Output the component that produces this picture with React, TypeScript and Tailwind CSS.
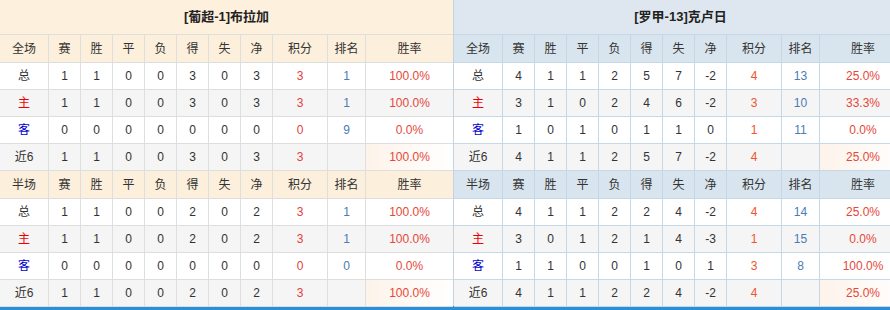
import React from "react";

type Row = { label: string; vals: (string | number)[]; pts: number; rank: string; rate: string };

const leftFull: Row[] = [
  { label: "总", vals: [1, 1, 0, 0, 3, 0, 3], pts: 3, rank: "1", rate: "100.0%" },
  { label: "主", vals: [1, 1, 0, 0, 3, 0, 3], pts: 3, rank: "1", rate: "100.0%" },
  { label: "客", vals: [0, 0, 0, 0, 0, 0, 0], pts: 0, rank: "9", rate: "0.0%" },
  { label: "近6", vals: [1, 1, 0, 0, 3, 0, 3], pts: 3, rank: "", rate: "100.0%" },
];
const leftHalf: Row[] = [
  { label: "总", vals: [1, 1, 0, 0, 2, 0, 2], pts: 3, rank: "1", rate: "100.0%" },
  { label: "主", vals: [1, 1, 0, 0, 2, 0, 2], pts: 3, rank: "1", rate: "100.0%" },
  { label: "客", vals: [0, 0, 0, 0, 0, 0, 0], pts: 0, rank: "0", rate: "0.0%" },
  { label: "近6", vals: [1, 1, 0, 0, 2, 0, 2], pts: 3, rank: "", rate: "100.0%" },
];
const rightFull: Row[] = [
  { label: "总", vals: [4, 1, 1, 2, 5, 7, -2], pts: 4, rank: "13", rate: "25.0%" },
  { label: "主", vals: [3, 1, 0, 2, 4, 6, -2], pts: 3, rank: "10", rate: "33.3%" },
  { label: "客", vals: [1, 0, 1, 0, 1, 1, 0], pts: 1, rank: "11", rate: "0.0%" },
  { label: "近6", vals: [4, 1, 1, 2, 5, 7, -2], pts: 4, rank: "", rate: "25.0%" },
];
const rightHalf: Row[] = [
  { label: "总", vals: [4, 1, 1, 2, 2, 4, -2], pts: 4, rank: "14", rate: "25.0%" },
  { label: "主", vals: [3, 0, 1, 2, 1, 4, -3], pts: 1, rank: "15", rate: "0.0%" },
  { label: "客", vals: [1, 1, 0, 0, 1, 0, 1], pts: 3, rank: "8", rate: "100.0%" },
  { label: "近6", vals: [4, 1, 1, 2, 2, 4, -2], pts: 4, rank: "", rate: "25.0%" },
];

const heads = ["赛", "胜", "平", "负", "得", "失", "净", "积分", "排名", "胜率"];

const GRID = "grid grid-cols-[49px_32px_32px_32px_32px_32px_32px_32px_55px_38px_87px]";

function Table({ side, title, full, half }: { side: "l" | "r"; title: string; full: Row[]; half: Row[] }) {
  const isL = side === "l";
  const bd = isL ? "border-[#dedede]" : "border-[#c6d7e5]";
  const cell = `flex items-center justify-center border-r border-b ${bd}`;
  const headBg = isL ? "bg-[#fcefdc]" : "bg-[#d9e5ee]";
  const ptsColor = isL ? "text-[#e5413a]" : "text-[#f0552c]";

  const header = (first: string, top: boolean) => (
    <div className={`${GRID} h-[28px] ${headBg} ${top ? "border-t " + bd : ""}`}>
      <div className={cell}>{first}</div>
      {heads.map((h, i) => (
        <div key={i} className={`${cell} ${i === heads.length - 1 && isL ? "border-r-0" : ""}`}>{h}</div>
      ))}
    </div>
  );

  const rows = (data: Row[]) =>
    data.map((r, idx) => (
      <div key={idx} className={`${GRID} h-[27px] ${idx % 2 === 1 ? "bg-[#f5f5f5]" : "bg-white"}`}>
        <div
          className={`${cell} ${
            r.label === "主" ? "text-[#ee0000]" : r.label === "客" ? "text-[#0000cc]" : "text-[#333]"
          }`}
        >
          {r.label}
        </div>
        {r.vals.map((v, i) => (
          <div key={i} className={cell}>
            {v}
          </div>
        ))}
        <div className={`${cell} ${ptsColor}`}>{r.pts}</div>
        <div className={`${cell} text-[#4a7cb6]`}>{r.rank}</div>
        <div
          className={`${cell} text-[#e5483a] ${isL ? "border-r-0" : ""} ${
            idx === 3 ? "bg-gradient-to-r from-[#fdf3ea] to-[#ffffff]" : ""
          }`}
        >
          {r.rate}
        </div>
      </div>
    ));

  return (
    <div className="w-[453px] shrink-0">
      <div
        className={`h-[34px] flex items-center justify-center font-bold text-[13px] text-[#222] ${
          isL ? "bg-[#fdf0dd]" : "bg-[#dee7ef]"
        }`}
      >
        {title}
      </div>
      <div className={`border-t ${bd}`} />
      {header("全场", false)}
      {rows(full)}
      {header("半场", false)}
      {rows(half)}
    </div>
  );
}

export default function App() {
  return (
    <div
      className="w-[890px] h-[310px] overflow-hidden bg-white text-[12px] text-[#333]"
      style={{ fontFamily: '"Liberation Sans", "Noto Sans CJK SC", sans-serif' }}
    >
      <div className="flex w-[907px] h-[306px]">
        <Table side="l" title="[葡超-1]布拉加" full={leftFull} half={leftHalf} />
        <div className="w-px shrink-0 bg-[#c2d4e2]" />
        <Table side="r" title="[罗甲-13]克卢日" full={rightFull} half={rightHalf} />
      </div>
      <div className="h-[4px] bg-[#2a8fd6]" />
    </div>
  );
}
